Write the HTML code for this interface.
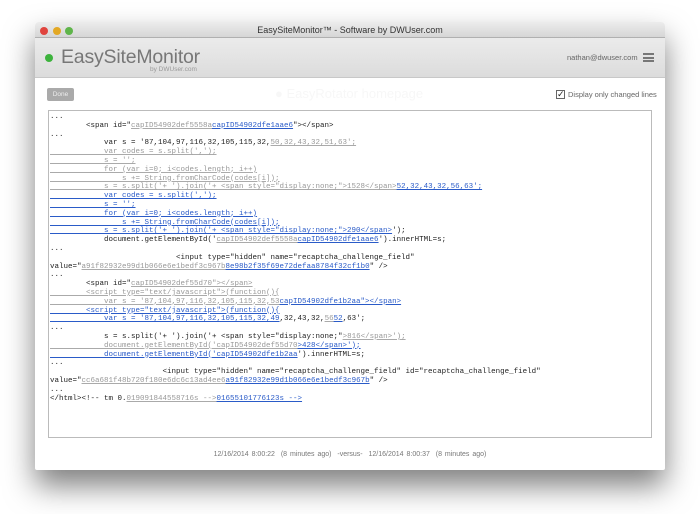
<!DOCTYPE html>
<html><head><meta charset="utf-8"><style>
*{margin:0;padding:0;box-sizing:border-box}
body{width:700px;height:514px;background:#fff;position:relative;overflow:hidden;font-family:"Liberation Sans",sans-serif}
#win{position:absolute;left:35px;top:22px;width:630px;height:448px;background:#fff;box-shadow:0 16px 30px rgba(0,0,0,.5);border-radius:4px 4px 2px 2px;overflow:hidden}
#tb{height:16px;background:linear-gradient(#ececec,#d6d6d6);border-bottom:1px solid #b0b0b0;text-align:center;font-size:9px;line-height:16px;color:#333}
.tl{position:absolute;top:5px;width:8px;height:8px;border-radius:50%}
#hd{position:absolute;top:16px;left:0;right:0;height:40px;background:linear-gradient(#ebebeb,#dcdcdc);border-bottom:1px solid #c8c8c8}
.abs{position:absolute}
pre{position:absolute;left:15px;top:91px;font-family:"Liberation Mono",monospace;font-size:7.5px;line-height:8.8px;color:#222}
.d{color:#999;text-decoration:underline;text-decoration-color:#aaa}
.a{color:#2a5bc8;text-decoration:underline}
.dl{text-decoration:underline;text-decoration-color:#aaa}
</style></head><body>
<div id="win">
<div id="tb">EasySiteMonitor™ - Software by DWUser.com
<div class="tl" style="left:5px;background:#e0443e"></div>
<div class="tl" style="left:18px;background:#e3a824"></div>
<div class="tl" style="left:30px;background:#5fb54a"></div>
</div>
<div id="hd">
<div class="abs" style="left:10px;top:16px;width:8px;height:8px;border-radius:50%;background:#3db33d"></div>
<div class="abs" style="left:26px;top:8px;font-size:19.5px;color:#777;letter-spacing:-0.2px">EasySiteMonitor</div>
<div class="abs" style="left:115px;top:28px;font-size:6.5px;color:#999">by DWUser.com</div>
<div class="abs" style="left:532px;top:15px;font-size:7.5px;color:#666">nathan@dwuser.com</div>
<div class="abs" style="left:608px;top:15px;width:11px;height:9px;border-top:2px solid #777;border-bottom:2px solid #777"><div style="margin-top:1.5px;height:2px;background:#777"></div></div>
</div>
<div class="abs" style="left:12px;top:66px;width:27px;height:13px;background:#aaa;border-radius:2px;color:#eee;font-size:6.5px;line-height:13px;text-align:center">Done</div>
<div class="abs" style="left:240px;top:64px;font-size:13px;color:#f7f7f7">● EasyRotator homepage</div>
<div class="abs" style="left:521px;top:68px;width:9px;height:9px;border:1px solid #666;background:#fff;font-size:9px;line-height:7px;color:#222">✓</div>
<div class="abs" style="left:533px;top:68px;font-size:7.5px;color:#666">Display only changed lines</div>
<div class="abs" style="left:13px;top:88px;width:604px;height:328px;border:1px solid #bbb"></div>
<pre>...
        &lt;span id="<span class="d">capID54902def5558a</span><span class="a">capID54902dfe1aae6</span>"&gt;&lt;/span&gt;
...
            var s = '87,104,97,116,32,105,115,32,<span class="d">50,32,43,32,51,63';</span>
<span class="dl d">            var codes = s.split(',');</span>
<span class="dl d">            s = '';</span>
<span class="dl d">            for (var i=0; i&lt;codes.length; i++)</span>
<span class="dl d">                s += String.fromCharCode(codes[i]);</span>
<span class="dl d">            s = s.split('+ ').join('+ &lt;span style="display:none;"&gt;1528&lt;/span&gt;</span><span class="a">52,32,43,32,56,63';</span>
<span class="a">            var codes = s.split(',');</span>
<span class="a">            s = '';</span>
<span class="a">            for (var i=0; i&lt;codes.length; i++)</span>
<span class="a">                s += String.fromCharCode(codes[i]);</span>
<span class="a">            s = s.split('+ ').join('+ &lt;span style="display:none;"&gt;290&lt;/span&gt;</span>');
            document.getElementById('<span class="d">capID54902def5558a</span><span class="a">capID54902dfe1aae6</span>').innerHTML=s;
...
                            &lt;input type="hidden" name="recaptcha_challenge_field"
value="<span class="d">a91f82932e99d1b066e6e1bedf3c967b</span><span class="a">8e98b2f35f69e72defaa8784f32cf1b0</span>" /&gt;
...
        &lt;span id="<span class="d">capID54902def55d70"&gt;&lt;/span&gt;</span>
<span class="d">        &lt;script type="text/javascript"&gt;(function(){</span>
<span class="d">            var s = '87,104,97,116,32,105,115,32,53</span><span class="a">capID54902dfe1b2aa"&gt;&lt;/span&gt;</span>
<span class="a">        &lt;script type="text/javascript"&gt;(function(){</span>
<span class="a">            var s = '87,104,97,116,32,105,115,32,49</span>,32,43,32,<span class="d">56</span><span class="a">52</span>,63';
...
            s = s.split('+ ').join('+ &lt;span style="display:none;"<span class="d">&gt;816&lt;/span&gt;');</span>
<span class="d">            document.getElementById('capID54902def55d70</span><span class="a">&gt;428&lt;/span&gt;');</span>
<span class="a">            document.getElementById('capID54902dfe1b2aa</span>').innerHTML=s;
...
                         &lt;input type="hidden" name="recaptcha_challenge_field" id="recaptcha_challenge_field"
value="<span class="d">cc6a681f48b720f180e6dc6c13ad4ee6</span><span class="a">a91f82932e99d1b066e6e1bedf3c967b</span>" /&gt;
...
&lt;/html&gt;&lt;!-- tm 0.<span class="d">019091844558716s --&gt;</span><span class="a">01655101776123s --&gt;</span></pre>
<div class="abs" style="left:0;right:0;top:429px;text-align:center;font-size:7px;color:#777;word-spacing:1px">12/16/2014 8:00:22 &nbsp;(8 minutes ago) &nbsp;-versus- &nbsp;12/16/2014 8:00:37 &nbsp;(8 minutes ago)</div>
</div>
</body></html>
